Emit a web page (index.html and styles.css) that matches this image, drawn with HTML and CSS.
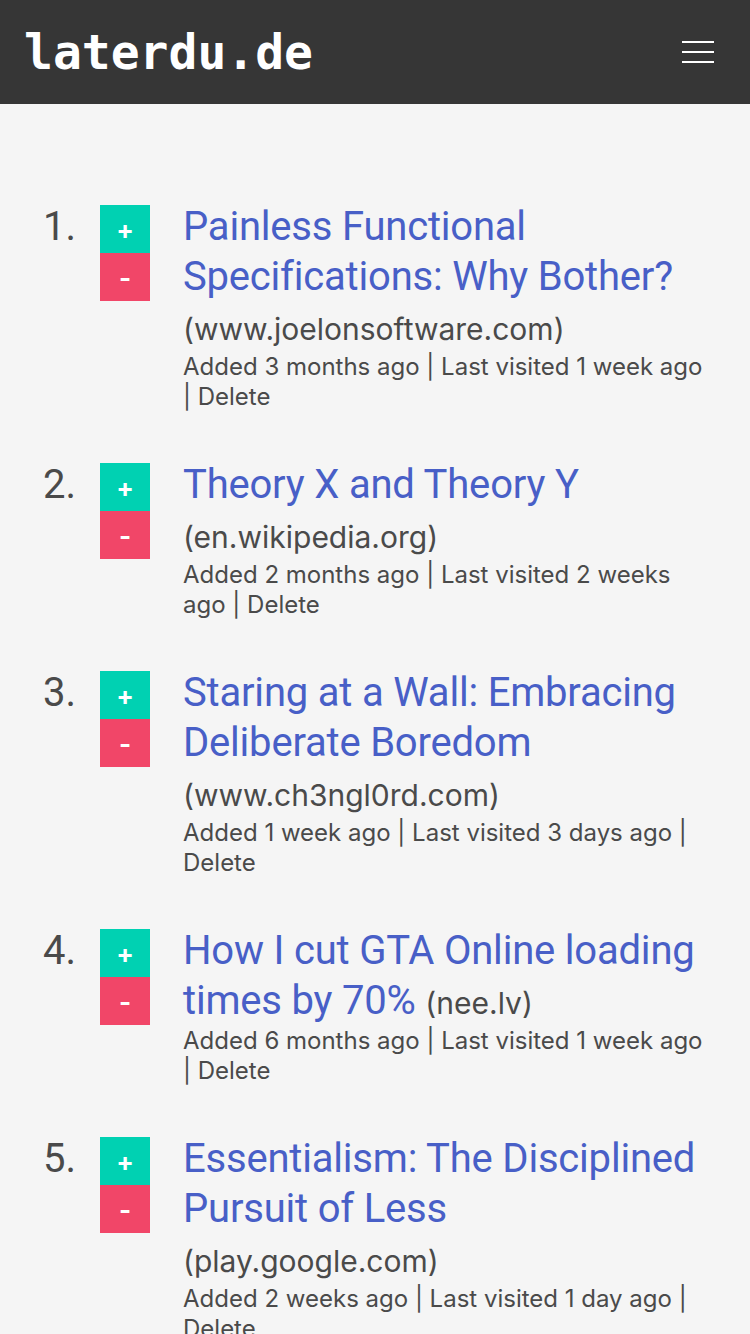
FILE: index.html
```html
<!DOCTYPE html>
<html lang="en">
<head>
  <meta charset="UTF-8">
  <title>laterdu.de</title>
  <link rel="stylesheet" href="styles.css">
</head>
<body>
  <nav class="navbar">
    <a class="logo" href="#">laterdu.de</a>
    <a class="burger" href="#" aria-label="menu">
      <span></span>
      <span></span>
      <span></span>
    </a>
  </nav>

  <section class="section">
    <ol class="links">
      <li class="link-item">
        <span class="num">1.</span>
        <div class="votes">
          <button class="vote up">+</button>
          <button class="vote down">-</button>
        </div>
        <div class="content">
          <p class="title"><a href="#">Painless Functional Specifications: Why Bother?</a> <span class="domain">(www.joelonsoftware.com)</span></p>
          <p class="meta">Added 3 months ago | Last visited 1 week ago | <a href="#">Delete</a></p>
        </div>
      </li>
      <li class="link-item">
        <span class="num">2.</span>
        <div class="votes">
          <button class="vote up">+</button>
          <button class="vote down">-</button>
        </div>
        <div class="content">
          <p class="title"><a href="#">Theory X and Theory Y</a> <span class="domain">(en.wikipedia.org)</span></p>
          <p class="meta">Added 2 months ago | Last visited 2 weeks ago | <a href="#">Delete</a></p>
        </div>
      </li>
      <li class="link-item">
        <span class="num">3.</span>
        <div class="votes">
          <button class="vote up">+</button>
          <button class="vote down">-</button>
        </div>
        <div class="content">
          <p class="title"><a href="#">Staring at a Wall: Embracing Deliberate Boredom</a> <span class="domain">(www.ch3ngl0rd.com)</span></p>
          <p class="meta">Added 1 week ago | Last visited 3 days ago | <a href="#">Delete</a></p>
        </div>
      </li>
      <li class="link-item">
        <span class="num">4.</span>
        <div class="votes">
          <button class="vote up">+</button>
          <button class="vote down">-</button>
        </div>
        <div class="content">
          <p class="title"><a href="#">How I cut GTA Online loading times by 70%</a> <span class="domain">(nee.lv)</span></p>
          <p class="meta">Added 6 months ago | Last visited 1 week ago | <a href="#">Delete</a></p>
        </div>
      </li>
      <li class="link-item">
        <span class="num">5.</span>
        <div class="votes">
          <button class="vote up">+</button>
          <button class="vote down">-</button>
        </div>
        <div class="content">
          <p class="title"><a href="#">Essentialism: The Disciplined Pursuit of Less</a> <span class="domain">(play.google.com)</span></p>
          <p class="meta">Added 2 weeks ago | Last visited 1 day ago | <a href="#">Delete</a></p>
        </div>
      </li>
    </ol>
  </section>
</body>
</html>
```

FILE: styles.css
```css
body {
  margin: 0;
  background-color: #f5f5f5;
  font-family: 'Inter', 'Noto Sans', sans-serif;
  color: #4a4a4a;
}
a {
  text-decoration: none;
}
.navbar {
  height: 104px;
  background: #363636;
  display: flex;
  align-items: center;
  justify-content: space-between;
  padding: 0 36px 0 24px;
}
.logo {
  font-family: 'DejaVu Sans Mono', monospace;
  font-weight: bold;
  font-size: 48px;
  color: #fff;
}
.burger {
  display: flex;
  flex-direction: column;
  gap: 8px;
  width: 32px;
}
.burger span {
  display: block;
  height: 2px;
  background: #fff;
}
.section {
  padding: 98px 42px 0 0;
}
.links {
  list-style: none;
  margin: 0;
  padding: 0;
}
.link-item {
  display: flex;
  align-items: flex-start;
  margin-bottom: 48px;
}
.num {
  width: 76px;
  text-align: right;
  font-family: 'Roboto', sans-serif;
  font-size: 40px;
  line-height: 50px;
  flex-shrink: 0;
}
.votes {
  display: flex;
  flex-direction: column;
  width: 50px;
  margin: 3px 33px 0 24px;
  flex-shrink: 0;
}
.vote {
  height: 48px;
  border: none;
  color: #fff;
  font-family: 'Inter', sans-serif;
  font-weight: bold;
  font-size: 26px;
  padding: 0;
  cursor: pointer;
}
.up {
  background: #00d1b2;
}
.down {
  background: #f14668;
}
.content {
  flex: 1;
}
.title {
  margin: 0;
  font-family: 'Roboto', sans-serif;
  font-size: 40px;
  line-height: 50px;
  letter-spacing: -0.2px;
}
.title a {
  color: #485fc7;
}
.domain {
  font-family: 'Inter', sans-serif;
  font-size: 30px;
  letter-spacing: 0;
  color: #4a4a4a;
}
.meta {
  margin: -2px 0 0;
  font-size: 24px;
  line-height: 30px;
}
.meta a {
  color: #4a4a4a;
}
```
